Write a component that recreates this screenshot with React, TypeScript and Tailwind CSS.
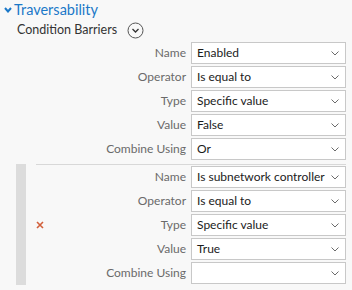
import React from "react";

const font = { fontFamily: 'Lato, "Noto Sans", sans-serif' };

function Chevron() {
  return (
    <svg width="8" height="5" viewBox="0 0 8 5" className="shrink-0">
      <polyline points="0.5,0.5 4,4 7.5,0.5" fill="none" stroke="#6b6b6b" strokeWidth="1" />
    </svg>
  );
}

function Row({ label, value }: { label: string; value: string }) {
  return (
    <div className="flex items-center h-[22px]">
      <div className="flex-1 text-right pr-[5px] text-[12px] text-[#6a6a6a] leading-[16px] whitespace-nowrap">{label}</div>
      <div className="w-[155px] h-[22px] bg-white border border-[#c8c8c8] flex items-center pl-[5px] pr-[6px]">
        <div className="flex-1 text-[12px] text-[#1b1b1b] leading-[16px] whitespace-nowrap">{value}</div>
        <Chevron />
      </div>
    </div>
  );
}

export default function App() {
  const g1 = [
    ["Name", "Enabled"],
    ["Operator", "Is equal to"],
    ["Type", "Specific value"],
    ["Value", "False"],
    ["Combine Using", "Or"],
  ];
  const g2 = [
    ["Name", "Is subnetwork controller"],
    ["Operator", "Is equal to"],
    ["Type", "Specific value"],
    ["Value", "True"],
    ["Combine Using", ""],
  ];
  return (
    <div className="w-[352px] h-[290px] bg-[#f8f8f8] overflow-hidden" style={font}>
      <div className="flex items-center h-[20px] pl-[4px]">
        <svg width="8" height="6" viewBox="0 0 8 6" className="mr-[2px]">
          <polyline points="1,1 4,4.5 7,1" fill="none" stroke="#1b78c8" strokeWidth="2" />
        </svg>
        <span className="text-[14.5px] text-[#1b78c8] leading-[18px]">Traversability</span>
      </div>
      <div className="flex items-center h-[20px] pl-[17px]">
        <span className="text-[12.5px] text-[#333] leading-[16px]">Condition Barriers</span>
        <svg width="17" height="17" viewBox="0 0 17 17" className="ml-[10px]">
          <circle cx="8.5" cy="8.5" r="7.5" fill="none" stroke="#555" strokeWidth="1" />
          <polyline points="5.5,7 8.5,10 11.5,7" fill="none" stroke="#333" strokeWidth="1.3" />
        </svg>
      </div>
      <div className="pr-[6px] pt-[2px] flex flex-col gap-[2px]">
        {g1.map(([l, v]) => (
          <Row key={l} label={l} value={v} />
        ))}
      </div>
      <div className="flex mt-[4px] pl-[16px] pr-[6px]">
        <div className="w-[10px] h-[121px] bg-[#dcdcdc]" />
        <div className="flex-1 pl-[10px]">
          <div className="h-px bg-[#d8d8d8]" />
          <div className="flex items-center pt-[1px]">
            <svg width="8" height="8" viewBox="0 0 8 8" className="shrink-0">
              <path d="M1,1 L7,7 M7,1 L1,7" stroke="#d2603c" strokeWidth="1.6" />
            </svg>
            <div className="flex-1 flex flex-col gap-[2px]">
              {g2.map(([l, v]) => (
                <Row key={l} label={l} value={v} />
              ))}
            </div>
          </div>
        </div>
      </div>
    </div>
  );
}
